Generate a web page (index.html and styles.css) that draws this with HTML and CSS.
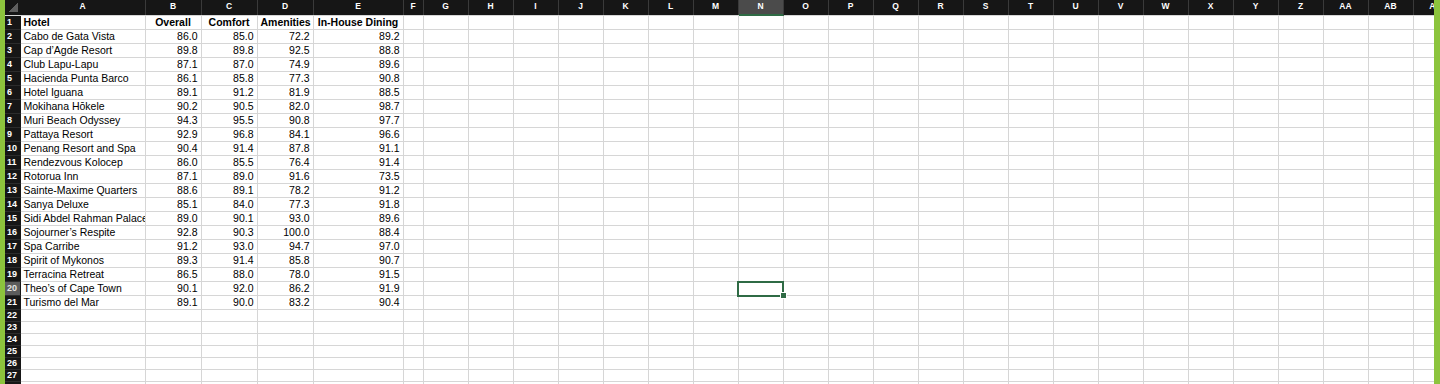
FILE: index.html
```html
<!DOCTYPE html>
<html>
	<head>
		<meta charset="UTF-8">
		<title>Hotel scores</title>

		<link rel="stylesheet" href="styles.css">

		<script type="text/javascript">
			window.onload = function(){
				//表格数据
				var hotels = [
					["Cabo de Gata Vista", "86.0", "85.0", "72.2", "89.2"],
					["Cap d’Agde Resort", "89.8", "89.8", "92.5", "88.8"],
					["Club Lapu-Lapu", "87.1", "87.0", "74.9", "89.6"],
					["Hacienda Punta Barco", "86.1", "85.8", "77.3", "90.8"],
					["Hotel Iguana", "89.1", "91.2", "81.9", "88.5"],
					["Mokihana Hōkele", "90.2", "90.5", "82.0", "98.7"],
					["Muri Beach Odyssey", "94.3", "95.5", "90.8", "97.7"],
					["Pattaya Resort", "92.9", "96.8", "84.1", "96.6"],
					["Penang Resort and Spa", "90.4", "91.4", "87.8", "91.1"],
					["Rendezvous Kolocep", "86.0", "85.5", "76.4", "91.4"],
					["Rotorua Inn", "87.1", "89.0", "91.6", "73.5"],
					["Sainte-Maxime Quarters", "88.6", "89.1", "78.2", "91.2"],
					["Sanya Deluxe", "85.1", "84.0", "77.3", "91.8"],
					["Sidi Abdel Rahman Palace", "89.0", "90.1", "93.0", "89.6"],
					["Sojourner’s Respite", "92.8", "90.3", "100.0", "88.4"],
					["Spa Carribe", "91.2", "93.0", "94.7", "97.0"],
					["Spirit of Mykonos", "89.3", "91.4", "85.8", "90.7"],
					["Terracina Retreat", "86.5", "88.0", "78.0", "91.5"],
					["Theo’s of Cape Town", "90.1", "92.0", "86.2", "91.9"],
					["Turismo del Mar", "89.1", "90.0", "83.2", "90.4"]
				];
				var titles = ["Hotel", "Overall", "Comfort", "Amenities", "In-House Dining"];

				//列名 A ~ AC
				var letters = [];
				for (var i = 0; i < 29; i++) {
					letters.push(i < 26 ? String.fromCharCode(65 + i) : "A" + String.fromCharCode(65 + i - 26));
				}
				//选中的单元格 N20
				var activeCol = 13;
				var activeRow = 20;

				//列宽
				var cols = document.getElementById("cols");
				var colClass = ["c-a", "c-num", "c-num", "c-num", "c-e", "c-f"];
				cols.innerHTML = '<col class="c-rh">';
				for (var i = 0; i < letters.length; i++) {
					cols.innerHTML += '<col class="' + (colClass[i] || "c-std") + '">';
				}

				//表头
				var head = '<th class="corner"></th>';
				for (var i = 0; i < letters.length; i++) {
					head += '<th' + (i == activeCol ? ' class="on"' : '') + '>' + letters[i] + '</th>';
				}
				document.getElementById("colHead").innerHTML = head;

				//行
				var body = "";
				for (var r = 1; r <= 28; r++) {
					var data = r == 1 ? titles : hotels[r - 2];
					var tr = '<tr class="' + (data ? "full" : "empty") + '">';
					tr += '<td class="rh' + (r == activeRow ? ' on' : '') + '">' + r + '</td>';
					for (var c = 0; c < letters.length; c++) {
						var cls = [];
						var text = data && c < data.length ? data[c] : "";
						if (r == 1 && c < 5) cls.push("title");
						if (r == 1 && c > 0 && c < 5) cls.push("center");
						if (r > 1 && c > 0 && c < 5) cls.push("num");
						if (r == activeRow && c == activeCol) cls.push("active");
						tr += '<td class="' + cls.join(" ") + '">' + text + '</td>';
					}
					body += tr + '</tr>';
				}
				document.getElementById("rows").innerHTML = body;
			};
		</script>
	</head>
	<body>
		<!-- 工作表 -->
		<div class="sheet">
			<table class="grid">
				<colgroup id="cols"></colgroup>
				<thead>
					<tr id="colHead"></tr>
				</thead>
				<tbody id="rows"></tbody>
			</table>
		</div>
	</body>
</html>
```

FILE: styles.css
```css
*{
	margin: 0;
	padding: 0;
}

body{
	/*两侧的绿色边*/
	background-color: #8cc43d;
	overflow: hidden;
	font-family: "Liberation Sans", Arial, sans-serif;
}

.sheet{
	margin: 0 6px 0 5px;
	height: 384px;
	background-color: #fff;
	overflow: hidden;
}

/*表格*/
.grid{
	border-collapse: collapse;
	table-layout: fixed;
	width: 1453px;
}

.c-rh{ width: 15px; }
.c-a{ width: 125px; }
.c-num{ width: 56px; }
.c-e{ width: 90px; }
.c-f{ width: 20px; }
.c-std{ width: 45px; }

/*列名*/
.grid th{
	height: 12px;
	padding: 0 0 3px;
	background-color: #161616;
	border-right: 1px solid #3a3a3a;
	border-bottom: 1px solid #d6d6d6;
	color: #fff;
	font-size: 8.5px;
	font-weight: bold;
	line-height: 11px;
	text-align: center;
	vertical-align: middle;
}

.grid th.on{
	background-color: #4b4b4b;
	border-bottom: 1px solid #2f6b45;
	box-shadow: inset 0 -1px 0 #2f6b45;
}

/*左上角的三角*/
.grid th.corner{
	border-right: 1px solid #161616;
	background: linear-gradient(to bottom right, #161616 50%, #5e5e5e 50%) 3px 3px / 10px 9px no-repeat, #161616;
}

/*单元格*/
.grid td{
	height: 13px;
	padding: 0 3px;
	border-right: 1px solid #d6d6d6;
	border-bottom: 1px solid #d6d6d6;
	font-size: 10.5px;
	line-height: 13px;
	white-space: nowrap;
	overflow: hidden;
	color: #000;
}

.grid tr.empty td{
	height: 11px;
	line-height: 11px;
}

/*行号*/
.grid td.rh{
	padding: 0 0 0 2px;
	background-color: #161616;
	border-right: 1px solid #161616;
	border-bottom: 1px solid #2c2c2c;
	color: #fff;
	font-size: 9px;
	font-weight: bold;
}

.grid td.rh.on{
	background-color: #5c5c5c;
	color: #e4e4e4;
}

.grid td.title{
	font-weight: bold;
}

.grid td.center{
	text-align: center;
}

.grid td.num{
	text-align: right;
}

/*选中的单元格*/
.grid td.active{
	position: relative;
	overflow: visible;
	outline: 2px solid #2f6b45;
	outline-offset: -1px;
}

.grid td.active::after{
	content: "";
	position: absolute;
	right: -4px;
	bottom: -4px;
	width: 5px;
	height: 5px;
	background-color: #2f6b45;
	border: 1px solid #fff;
}
```
